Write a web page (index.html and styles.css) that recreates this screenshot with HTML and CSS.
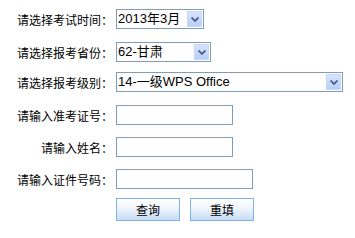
FILE: index.html
```html
<!DOCTYPE html>
<html lang="zh-CN">
<head>
<meta charset="utf-8">
<title>查询</title>
<link rel="stylesheet" href="styles.css">
</head>
<body>
<form class="form">
  <label class="lbl">请选择考试时间：</label>
  <div class="sel sel-time">
    <select><option>2013年3月</option></select>
    <span class="arrow"><svg width="8" height="5" viewBox="0 0 8 5"><path d="M0.5 0.5 L4 4 L7.5 0.5" fill="none" stroke="#4b6188" stroke-width="1.8"/></svg></span>
  </div>

  <label class="lbl">请选择报考省份：</label>
  <div class="sel sel-prov">
    <select><option>62-甘肃</option></select>
    <span class="arrow"><svg width="8" height="5" viewBox="0 0 8 5"><path d="M0.5 0.5 L4 4 L7.5 0.5" fill="none" stroke="#4b6188" stroke-width="1.8"/></svg></span>
  </div>

  <label class="lbl">请选择报考级别：</label>
  <div class="sel sel-level">
    <select><option>14-一级WPS Office</option></select>
    <span class="arrow"><svg width="8" height="5" viewBox="0 0 8 5"><path d="M0.5 0.5 L4 4 L7.5 0.5" fill="none" stroke="#4b6188" stroke-width="1.8"/></svg></span>
  </div>

  <label class="lbl">请输入准考证号：</label>
  <input class="txt txt-short" type="text">

  <label class="lbl">请输入姓名：</label>
  <input class="txt txt-short" type="text">

  <label class="lbl">请输入证件号码：</label>
  <input class="txt txt-long" type="text">

  <span class="lbl"></span>
  <div class="btns">
    <button type="button" class="btn">查询</button>
    <button type="button" class="btn">重填</button>
  </div>
</form>
</body>
</html>
```

FILE: styles.css
```css
html, body {
  margin: 0;
  padding: 0;
  background: #ffffff;
}

body {
  font-family: "Noto Sans CJK SC", "Liberation Sans", sans-serif;
  font-size: 12px;
  color: #000;
}

.form {
  display: grid;
  grid-template-columns: 113px auto;
  grid-template-rows: 33px 30px 33px 32px 32px 29px 23px;
  column-gap: 3px;
  padding-top: 9px;
  align-items: start;
  justify-items: start;
}

.lbl {
  justify-self: end;
  height: 20px;
  line-height: 21px;
  font-size: 12px;
  white-space: nowrap;
}

.sel {
  position: relative;
  height: 20px;
}

.sel select {
  -webkit-appearance: none;
  appearance: none;
  display: block;
  width: 100%;
  height: 20px;
  box-sizing: border-box;
  margin: 0;
  border: 1px solid #7f9db9;
  border-radius: 0;
  background: #fff;
  padding: 0 0 0 1px;
  font-family: "Liberation Sans", "Noto Sans CJK SC", sans-serif;
  font-size: 13px;
  line-height: 18px;
  color: #000;
  outline: none;
}

.sel-time { width: 88px; }
.sel-prov { width: 95px; }
.sel-level { width: 227px; }

.arrow {
  position: absolute;
  top: 2px;
  right: 2px;
  width: 15px;
  height: 16px;
  box-sizing: border-box;
  border: 1px solid #c7d6fb;
  background: linear-gradient(#d8e4fd, #b9cefa);
  display: flex;
  align-items: center;
  justify-content: center;
}

.arrow svg {
  display: block;
}

.txt {
  height: 20px;
  box-sizing: border-box;
  margin: 0;
  border: 1px solid #7f9db9;
  background: #fff;
  padding: 0 2px;
  outline: none;
}

.txt-short { width: 117px; }
.txt-long { width: 137px; }

.btns {
  display: flex;
  gap: 10px;
}

.btn {
  width: 64px;
  height: 23px;
  box-sizing: border-box;
  margin: 0;
  padding: 0;
  border: 1px solid #7cb3ee;
  border-radius: 0;
  background: linear-gradient(#ffffff 0%, #f2f7fd 40%, #c6dcf4 100%);
  font-family: "Noto Sans CJK SC", sans-serif;
  font-size: 12px;
  color: #000;
  line-height: 21px;
}
```
